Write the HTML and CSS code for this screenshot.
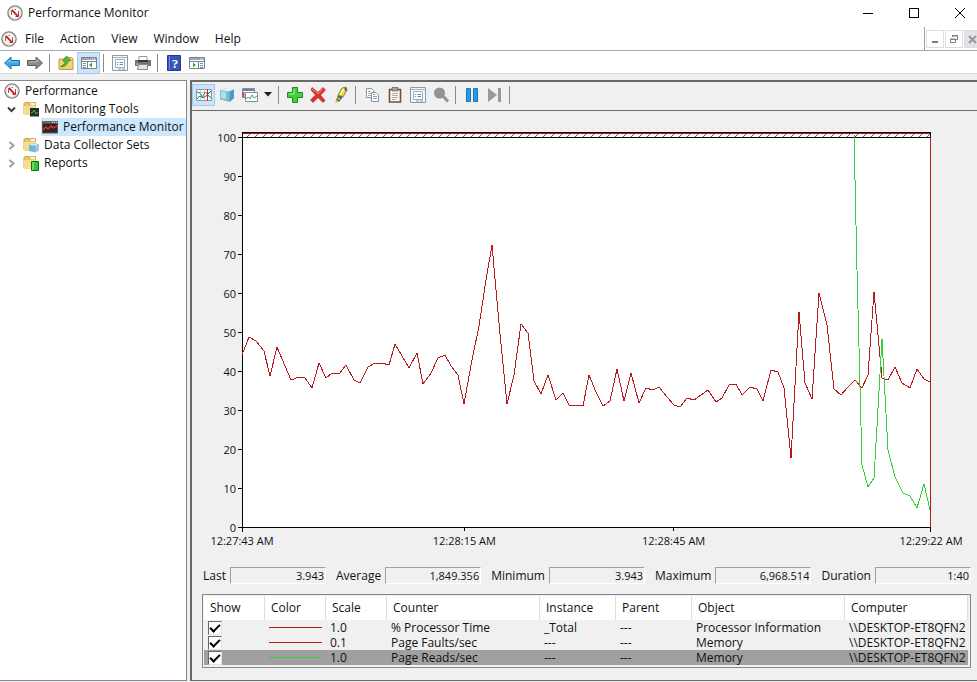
FILE: index.html
```html
<!DOCTYPE html>
<html lang="en">
<head>
<meta charset="utf-8">
<title>Performance Monitor</title>
<link rel="stylesheet" href="styles.css">
</head>
<body>
<svg class="defs" aria-hidden="true">
  <symbol id="gauge" viewBox="0 0 16 16">
    <circle cx="8" cy="8" r="7.100" fill="#fff" stroke="#8a8581" stroke-width="1.400"/>
    <circle cx="8" cy="8" r="5.800" fill="#fff" stroke="#d8d3cf" stroke-width=".8"/>
    <path d="M4.500 10V5.500M11.500 6V11M7.500 4.500H9" fill="none" stroke="#9b5f5c"/>
    <path d="M4.800 4.800L10.500 10.800" fill="none" stroke="#c8191c" stroke-width="1.800"/>
    <path d="M8.500 11.500H11.500V8.500" fill="none" stroke="#c8191c"/>
  </symbol>
  <symbol id="folder" viewBox="0 0 16 16">
    <path d="M1 2.500L2 1.500H6L7 3H12V13H1Z" fill="#e9c76b" stroke="#c9a244"/>
    <path d="M7 1.500H12.500V5H7Z" fill="#f7f3df" stroke="#d5b45b"/>
    <path d="M1 5H13V14H1Z" fill="#f6dd8d"/>
  </symbol>
  <symbol id="props" viewBox="0 0 16 16">
    <path d="M.5.500H15.500V15.500H.5Z" fill="#f7f8f9" stroke="#909aa3"/>
    <path d="M1 2.500H15" stroke="#aab4bc"/>
    <path d="M3.500 4.500H12.500V12.500H3.500Z" fill="#fff" stroke="#9fb0bf"/>
    <path d="M5 7.500H6M7.500 7.500H11M5 9.500H6M7.500 9.500H11" stroke="#4f8fb8"/>
    <path d="M6 14H9M10 14H13" stroke="#8998a5"/>
  </symbol>
</svg>

<header class="titlebar">
  <svg class="icon"><use href="#gauge"/></svg>
  <h1>Performance Monitor</h1>
  <div class="caption">
    <button aria-label="Minimize"><svg class="cap"><path d="M0 5.500H10"/></svg></button>
    <button aria-label="Maximize"><svg class="cap"><path d="M.5.500H9.500V9.500H.5Z"/></svg></button>
    <button aria-label="Close"><svg class="cap smooth"><path d="M0 0L10 10M10 0L0 10"/></svg></button>
  </div>
</header>

<nav class="menubar">
  <svg class="icon"><use href="#gauge"/></svg>
  <button>File</button><button>Action</button><button>View</button><button>Window</button><button>Help</button>
  <div class="mdi">
    <button aria-label="Minimize child"><svg width="10" height="10"><path d="M2 8H8" stroke="#75808c" stroke-width="2"/></svg></button>
    <button aria-label="Restore child"><svg width="10" height="10"><path d="M3.500 3V1.500H8.500V5.500H7M3 2H9M1.500 5H6.500V8.500H1.500ZM1 5.500H7" fill="none" stroke="#75808c"/></svg></button>
    <button class="off" aria-label="Close child"><svg width="10" height="10"><path d="M1 2L8 9M8 2L1 9" stroke="#8d99a5" stroke-width="2"/></svg></button>
  </div>
</nav>

<div class="toolbar" role="toolbar">
  <button aria-label="Back"><svg width="16" height="16"><path d="M.5 8L7 2V5.500H15.500V10.500H7V14Z" fill="#3aa6e3" stroke="#1776b5"/><path d="M3 7.500L6 5V7H14" fill="none" stroke="#86cff5"/></svg></button>
  <button aria-label="Forward"><svg width="16" height="16"><path d="M15.500 8L9 2V5.500H.5V10.500H9V14Z" fill="#8b8b8b" stroke="#5f5f5f"/><path d="M2 7H9.500V5L12 7" fill="none" stroke="#b5b5b5"/></svg></button>
  <i class="sep"></i>
  <button aria-label="Up one level"><svg width="16" height="16"><path d="M1 4H6L7 2.500H13.500L15 4V14.500H1Z" fill="#f1d179" stroke="#c29c45"/><path d="M3 11C6 10 7 8 7 6H4.500L8.500 1L13 5.500L10 6C10 9 7 12 3 12Z" fill="#52b83b" stroke="#318922" stroke-width=".7"/></svg></button>
  <button class="on" aria-label="Show or hide console tree"><svg width="16" height="16"><path d="M.5 2.500H15.500V13.500H.5Z" fill="#fff" stroke="#788590"/><path d="M1 4H15" stroke="#9aa7b2" stroke-width="2"/><path d="M11 4H12M13 4H14" stroke="#fff"/><path d="M1 6.500H15M6.500 7V13" stroke="#788590"/><path d="M2 8.500H5M2 10.500H5M2 12.500H5" stroke="#6b8db0"/><path d="M8 10L11 7.500V12.500Z" fill="#3ca63c"/></svg></button>
  <i class="sep"></i>
  <button aria-label="Properties"><svg class="icon"><use href="#props"/></svg></button>
  <button aria-label="Print"><svg width="16" height="16"><path d="M4 1.500H12V6H4Z" fill="#fff" stroke="#999"/><path d="M0 5H16V11H0Z" fill="#70757a"/><path d="M3 5H13V7H3Z" fill="#33383c"/><path d="M1 9H3" stroke="#ccc"/><path d="M3.500 9.500H12.500V14.500H2.500Z" fill="#d9e9f2" stroke="#888"/></svg></button>
  <i class="sep"></i>
  <button aria-label="Help"><svg width="14" height="16"><path d="M.5.500H13.500V15.500H.5Z" fill="#3556b5" stroke="#203c8d"/><path d="M2.500 1V15" stroke="#6f8cdc"/><text x="8" y="13" class="q">?</text></svg></button>
  <button aria-label="Show or hide action pane"><svg width="16" height="16"><path d="M.5 2.500H15.500V13.500H.5Z" fill="#fff" stroke="#788590"/><path d="M1 4H15" stroke="#9aa7b2" stroke-width="2"/><path d="M11 4H12M13 4H14" stroke="#fff"/><path d="M1 6.500H15M9.500 7V13" stroke="#788590"/><path d="M11 8.500H14M11 10.500H14M11 12.500H14" stroke="#6b8db0"/><path d="M7 10L4 7.500V12.500Z" fill="#3ca63c"/></svg></button>
</div>

<main class="split">
  <aside class="tree">
    <ul>
      <li><span class="node root"><svg class="icon"><use href="#gauge"/></svg>Performance</span>
        <ul>
          <li><span class="node"><svg class="chev" viewBox="0 0 9 9"><path d="M1 2.500L4.500 6L8 2.500" stroke="#404040"/></svg><svg class="icon"><use href="#folder"/><path d="M7 7H16V15.500H7Z" fill="#262b2b"/><path d="M8 12L10 11L11 9L13 13L15 11" fill="none" stroke="#45bd4c"/></svg>Monitoring Tools</span>
            <ul>
              <li><span class="node leaf"><svg width="16" height="16"><path d="M.5 2.500H15.500V14H.5Z" fill="#2d2425" stroke="#5e5555"/><path d="M1 3.500H15" stroke="#796c6c" stroke-width="2"/><path d="M10 3.500H11M12 3.500H13M14 3.500H15" stroke="#ddd"/><path d="M1 11L4 8L6 10L9 7L11 9L15 7" fill="none" stroke="#db3a32" stroke-width="1.300"/></svg><b>Performance Monitor</b></span></li>
            </ul>
          </li>
          <li><span class="node"><svg class="chev" viewBox="0 0 9 9"><path d="M2.500 1L6.500 4.500L2.500 8" stroke="#a0a0a0"/></svg><svg class="icon"><use href="#folder"/><path d="M6 8L9 6.500L16 7V13L12.500 15.500L6 14Z" fill="#73b7d6"/><path d="M6 8L9 6.500L16 7L12 8.500Z" fill="#d4eef8"/><path d="M12 8.500L16 7V13L12.500 15.500Z" fill="#97cbe0"/></svg>Data Collector Sets</span></li>
          <li><span class="node"><svg class="chev" viewBox="0 0 9 9"><path d="M2.500 1L6.500 4.500L2.500 8" stroke="#a0a0a0"/></svg><svg class="icon"><use href="#folder"/><path d="M8.500 6.500H15.500V15.500H8.500Z" fill="#2ec832" stroke="#0b7412"/><path d="M10 7V15" stroke="#a3efa3"/></svg>Reports</span></li>
        </ul>
      </li>
    </ul>
  </aside>

  <section class="monitor">
    <div class="graphbar" role="toolbar">
      <button class="on" aria-label="View current activity"><svg width="16" height="16"><path d="M.5 2.500H15.500V13.500H.5Z" fill="#fff" stroke="#8d9aa5"/><path d="M1 5.500H15M1 9.500H15M4.500 3V13M8.500 3V13" stroke="#c8d3da"/><path d="M1 5L4 6L7 11L10 9L15 4" fill="none" stroke="#4170a8"/><path d="M1 12L4 9L6 11L9 5L12 8L15 11" fill="none" stroke="#369a3d"/><path d="M11.500 2V14" stroke="#d22" stroke-width="1"/></svg></button>
      <button aria-label="View log data"><svg width="16" height="16"><path d="M1 3L5 1.500L15 2.500V11L10.500 15L1 12.500Z" fill="#7dbdd6"/><path d="M1 3L5 1.500L15 2.500L10.500 4.500Z" fill="#e2f3f9"/><path d="M10.500 4.500L15 2.500V11L10.500 15Z" fill="#4b9dbe"/><path d="M2 4L7 5V12L2 11Z" fill="#b4deec"/></svg></button>
      <button aria-label="Change graph type"><svg width="16" height="16"><path d="M.5 1.500H12.500V10.500H.5Z" fill="#fff" stroke="#8390a0"/><path d="M1 3H12" stroke="#6b83a5" stroke-width="2"/><path d="M1.500 5V10" stroke="#bd4b59" stroke-width="2"/><path d="M3.500 5.500H15.500V14.500H3.500Z" fill="#fff" stroke="#8390a0"/><path d="M4 12L6 10L8 12L10 8L12 11L15 9" fill="none" stroke="#51a34b"/></svg></button>
      <button class="drop" aria-label="Graph types"><svg width="8" height="5"><path d="M0 0H8L4 4.500Z" fill="#202020"/></svg></button>
      <i class="sep"></i>
      <button aria-label="Add counter"><svg width="16" height="16"><path d="M5.500.500H10.500V5.500H15.500V10.500H10.500V15.500H5.500V10.500H.5V5.500H5.500Z" fill="#45cf3e" stroke="#168c1b"/><path d="M7 2V7H2" fill="none" stroke="#a8f29d"/></svg></button>
      <button aria-label="Delete counter"><svg width="16" height="16"><path d="M2 .5L8 5.500L13 .5L15.500 3L10.500 8L15 13.500L13 15.500L8 10.500L3 15.500L.5 13L5.500 8L1 3Z" fill="#dc3030" stroke="#b31919" stroke-width=".6"/><path d="M2 2L8 7L13 2" fill="none" stroke="#f28b82"/></svg></button>
      <button aria-label="Highlight"><svg width="16" height="16"><path d="M9 1L13 0L14 3L10 10L5 8Z" fill="#e8d42f" stroke="#77743b" stroke-width=".8"/><path d="M5 8L10 10L6 15L3 13Z" fill="#59656b"/><path d="M3 13L6 15L2 15.500Z" fill="#e7c719"/><path d="M4.500 11L7 12.500" stroke="#e7c719" stroke-width="1.500"/><path d="M11 2L7 8" stroke="#fffbb0" stroke-width="1.500"/><path d="M12 1L13.500 4" stroke="#4d6e82" stroke-width="2"/></svg></button>
      <i class="sep"></i>
      <button aria-label="Copy properties"><svg width="16" height="16"><path d="M2.500 1.500H7.500L9.500 3.500V10.500H2.500Z" fill="#fff" stroke="#8796a3"/><path d="M4 4.500H7M4 6.500H8M4 8.500H7" stroke="#9db0c0"/><path d="M7.500 5.500H12L14.500 8V14.500H7.500Z" fill="#fff" stroke="#8796a3"/><path d="M9 9.500H13M9 11.500H13M9 7.500H11" stroke="#8ba2b4"/></svg></button>
      <button aria-label="Paste counter list"><svg width="16" height="16"><path d="M2.500 2.500H13.500V15H2.500Z" fill="#fafafa" stroke="#76502c" stroke-width="1.600"/><path d="M5 .5H11V4H5Z" fill="#9f9f9f" stroke="#5d5d5d" stroke-width=".7"/><path d="M5 6.500H11M5 8.500H11M5 10.500H11M5 12.500H9" stroke="#aaa"/></svg></button>
      <button aria-label="Properties"><svg class="icon"><use href="#props"/></svg></button>
      <button aria-label="Zoom"><svg width="16" height="16"><circle cx="6.500" cy="6" r="5.500" fill="#929292"/><path d="M10 9L15 14.500" stroke="#929292" stroke-width="3"/></svg></button>
      <i class="sep"></i>
      <button aria-label="Freeze display"><svg width="16" height="16"><path d="M2.500 1.500H6.500V14.500H2.500ZM9.500 1.500H13.500V14.500H9.500Z" fill="#2a9be0" stroke="#1878b8"/></svg></button>
      <button aria-label="Update data"><svg width="16" height="16"><path d="M1 1L10 8L1 15ZM11 1H14V15H11Z" fill="#999"/></svg></button>
      <i class="sep"></i>
    </div>

    <div class="chart">
      <div class="yaxis"><span>100</span><span>90</span><span>80</span><span>70</span><span>60</span><span>50</span><span>40</span><span>30</span><span>20</span><span>10</span><span>0</span></div>
      <svg class="plot" viewBox="238 132 693 400" preserveAspectRatio="none" role="img" aria-label="Counter values over time">
        <defs><pattern id="hatch" width="8" height="4" patternUnits="userSpaceOnUse" x="246" y="133"><path d="M1 4L5 0" stroke="#555"/></pattern></defs>
        <path d="M242 132H931V528H242Z" fill="#fff"/>
        <path d="M243 134H930V137H243Z" fill="url(#hatch)"/>
        <path class="ax" d="M242.500 132V532M238 527.500H931M238 137.500H931M242 132.500H931M930.500 132V138M930.500 528V532M464.500 528V531M673.500 528V531M238 176.500H242M238 215.500H242M238 254.500H242M238 293.500H242M238 332.500H242M238 371.500H242M238 410.500H242M238 449.500H242M238 488.500H242"/>
        <path class="red" d="M243 133.500H930"/>
        <polyline class="red" points="242,355 249,337 256,341 264,351 270,376 277,347 285,366 291,380 299,377 305,378 312,388 319,363 326,378 332,373 340,373 346,365 354,380 360,383 368,367 375,363 382,363 389,365 395,344 402,356 409,368 417,353 423,384 431,373 438,358 445,355 451,366 458,375 464,404 472,360 479,326 486,280 492,245 500,334 507,404 514,375 521,324 528,333 534,381 541,394 548,375 556,400 563,393 569,405 577,405 583,406 589,375 596,392 603,406 610,401 617,369 624,401 631,373 639,403 646,388 653,390 659,387 667,397 674,405 680,407 687,398 694,400 701,395 708,390 716,402 722,398 729,385 736,384 742,395 750,387 757,389 763,401 771,370 778,372 784,388 791,458 799,312 805,383 812,399 819,293 827,325 834,389 841,395 848,387 855,380 862,388 868,375 874,292 882,378 888,380 895,367 902,383 910,388 917,369 924,379 930,382"/>
        <polyline class="green" points="854,134 857,270 859,347 862,465 868,487 874,478 882,339 888,450 895,477 903,493 910,496 917,508 924,484 930,510"/>
        <path class="red" d="M930.500 138V527"/>
      </svg>
      <div class="xaxis"><span>12:27:43 AM</span><i class="g1"></i><span>12:28:15 AM</span><i class="g2"></i><span>12:28:45 AM</span><i class="g3"></i><span>12:29:22 AM</span></div>
    </div>

    <div class="stats">
      <label for="last">Last</label><input id="last" readonly value="3.943">
      <label for="avg">Average</label><input id="avg" readonly value="1,849.356">
      <label for="min">Minimum</label><input id="min" readonly value="3.943">
      <label for="max">Maximum</label><input id="max" readonly value="6,968.514">
      <label for="dur">Duration</label><input id="dur" readonly value="1:40">
    </div>

    <div class="legend">
      <table>
        <colgroup><col class="c0"><col class="c1"><col class="c1"><col class="c2"><col class="c3"><col class="c3"><col class="c2"><col class="c4"></colgroup>
        <thead><tr><th>Show</th><th>Color</th><th>Scale</th><th>Counter</th><th>Instance</th><th>Parent</th><th>Object</th><th>Computer</th></tr></thead>
        <tbody>
          <tr><td><input type="checkbox" checked aria-label="Show % Processor Time"></td><td><hr></td><td>1.0</td><td>% Processor Time</td><td>_Total</td><td>---</td><td>Processor Information</td><td>\\DESKTOP-ET8QFN2</td></tr>
          <tr><td><input type="checkbox" checked aria-label="Show Page Faults/sec"></td><td><hr></td><td>0.1</td><td>Page Faults/sec</td><td>---</td><td>---</td><td>Memory</td><td>\\DESKTOP-ET8QFN2</td></tr>
          <tr class="sel"><td><input type="checkbox" checked aria-label="Show Page Reads/sec"></td><td><hr></td><td>1.0</td><td>Page Reads/sec</td><td>---</td><td>---</td><td>Memory</td><td>\\DESKTOP-ET8QFN2</td></tr>
        </tbody>
      </table>
    </div>
  </section>
</main>
</body>
</html>
```
FILE: styles.css
```css
* { box-sizing: border-box; }
body {
  margin: 0;
  min-height: 100vh;
  display: flex;
  flex-direction: column;
  background: #f0f0f0;
  color: #111;
  font: 12px/16px "Open Sans", "Noto Sans", sans-serif;
  overflow: hidden;
}
button {
  border: 0;
  padding: 0;
  background: none;
  font: inherit;
  color: inherit;
}
svg { display: block; flex: none; overflow: visible; }
.defs { position: absolute; width: 0; height: 0; }
.icon { width: 16px; height: 16px; }
ul { margin: 0; padding: 0; list-style: none; }

.titlebar {
  display: flex;
  align-items: center;
  height: 25px;
  padding-left: 7px;
  gap: 5px;
  background: #fff;
}
.titlebar h1 { margin: 0; font-size: 12px; font-weight: 400; }
.caption { display: flex; margin-left: auto; }
.caption button { width: 46px; height: 24px; display: grid; place-items: center; }
.caption button:last-child { width: 40px; padding-left: 6px; }
.cap { width: 10px; height: 10px; fill: none; stroke: #000; shape-rendering: crispEdges; }
.smooth { shape-rendering: auto; }

.menubar {
  display: flex;
  align-items: center;
  height: 26px;
  padding: 2px 0 0 1px;
  background: #fff;
  border-bottom: 1px solid #a9a9ad;
}
.menubar > button { padding: 0 8px; }
.menubar .mdi {
  display: flex;
  align-self: stretch;
  align-items: center;
  gap: 1px;
  margin-left: auto;
  padding-left: 1px;
  border-left: 1px solid #a0a0a0;
  overflow: hidden;
  width: 53px;
}
.mdi button {
  flex: none;
  width: 18px;
  height: 18px;
  display: grid;
  place-items: center;
  border: 1px solid #dedede;
}
.mdi .off { background: #e3e3e3; }

.toolbar, .graphbar { display: flex; align-items: center; }
.toolbar {
  height: 23px;
  padding-top: 1px;
  background: #fff;
  border-bottom: 1px solid #dcdcdc;
}
.toolbar button, .graphbar button {
  width: 23px;
  height: 22px;
  display: grid;
  place-items: center;
}
.toolbar .on, .graphbar .on { background: #cce4f7; border: 1px solid #9fcbee; }
.sep { flex: none; width: 1px; height: 18px; margin: 0 4px 0 3px; background: #8a8a8a; }
.q { fill: #fff; font: 700 13px "Liberation Serif", serif; text-anchor: middle; }

.split { flex: 1; display: flex; gap: 3px; padding: 6px 0 1px; }
.tree {
  flex: none;
  width: 187px;
  background: #fff;
  border: solid #828790;
  border-width: 1px 1px 1px 0;
  padding-top: 1px;
}
.node { display: flex; align-items: center; height: 18px; gap: 5px; padding-left: 7px; white-space: nowrap; }
.root { padding-left: 4px; }
.leaf b { font-weight: 400; }
.node .chev { width: 9px; height: 9px; fill: none; stroke-width: 2; }
.node .chev + .icon { margin-left: 2px; }
.leaf { width: max-content; margin-left: 41px; padding: 0 2px 0 1px; background: #cce8ff; }

.monitor {
  flex: 1;
  min-width: 0;
  display: flex;
  flex-direction: column;
  border: solid #696969;
  border-width: 2px 0 1px 2px;
}
.graphbar { height: 29px; padding-bottom: 3px; border-bottom: 1px solid #696969; }
.graphbar .drop { width: 14px; }

.chart {
  flex: 1;
  display: grid;
  grid-template: 1fr 24px / 46px 1fr;
  margin: 21px 46px 0 0;
  min-height: 0;
}
.yaxis {
  display: flex;
  flex-direction: column;
  justify-content: space-between;
  padding-right: 2px;
  text-align: right;
  margin: -2px 0 -4px;
}
.plot { width: 100%; height: 100%; min-height: 0; shape-rendering: crispEdges; fill: none; }
.plot .ax { stroke: #000; }
.plot .red { stroke: #b51a1f; }
.plot .green { stroke: #34d134; }
.xaxis { grid-column: 2; display: flex; padding: 1px 0 0 4px; }
.xaxis span { width: 0; display: flex; justify-content: center; white-space: nowrap; }
.g1 { flex: 222; }
.g2 { flex: 209; }
.g3 { flex: 257; }

.yaxis, .xaxis, .stats input { font-size: 11px; }

.stats { display: flex; align-items: center; margin: 11px 6px 0 11px; height: 17px; }
.stats label { margin-right: 4px; }
.stats input {
  flex: 1;
  min-width: 0;
  height: 17px;
  margin-right: 10px;
  padding: 0 1px;
  border: 1px solid;
  border-color: #a0a0a0 #fff #fff #a0a0a0;
  background: none;
  color: inherit;
  font-family: inherit;
  text-align: right;
}
.stats input:last-child { margin-right: 0; }

.legend { margin: 10px 6px 12px 10px; padding: 1px 2px 2px 1px; border: 1px solid #828790; }
table { width: 100%; table-layout: fixed; border-collapse: separate; border-spacing: 0; }
.c0 { width: 61px; }
.c1 { width: 61px; }
.c2 { width: 153px; }
.c3 { width: 76px; }
th {
  height: 24px;
  padding: 0 0 0 6px;
  background: #fff;
  border-right: 1px solid #e0e0e0;
  font-weight: 400;
  text-align: left;
}
td { height: 15px; padding: 0 0 0 4px; line-height: 15px; white-space: nowrap; }
td input {
  display: grid;
  place-items: center;
  appearance: none;
  width: 14px;
  height: 14px;
  margin: 0;
  background: #fff;
  border: 1px solid;
  border-color: #696969 #e3e3e3 #e3e3e3 #696969;
}
td input::after {
  content: "";
  width: 8px;
  height: 4px;
  border: solid #000;
  border-width: 0 0 2px 2px;
  transform: translateY(-1px) rotate(-45deg);
}
td hr { height: 1px; margin: 0 4px 0 0; border: 0; background: #b51a1f; }
.sel td { background: #a0a0a0; }
.sel hr { background: #34d134; }
```
